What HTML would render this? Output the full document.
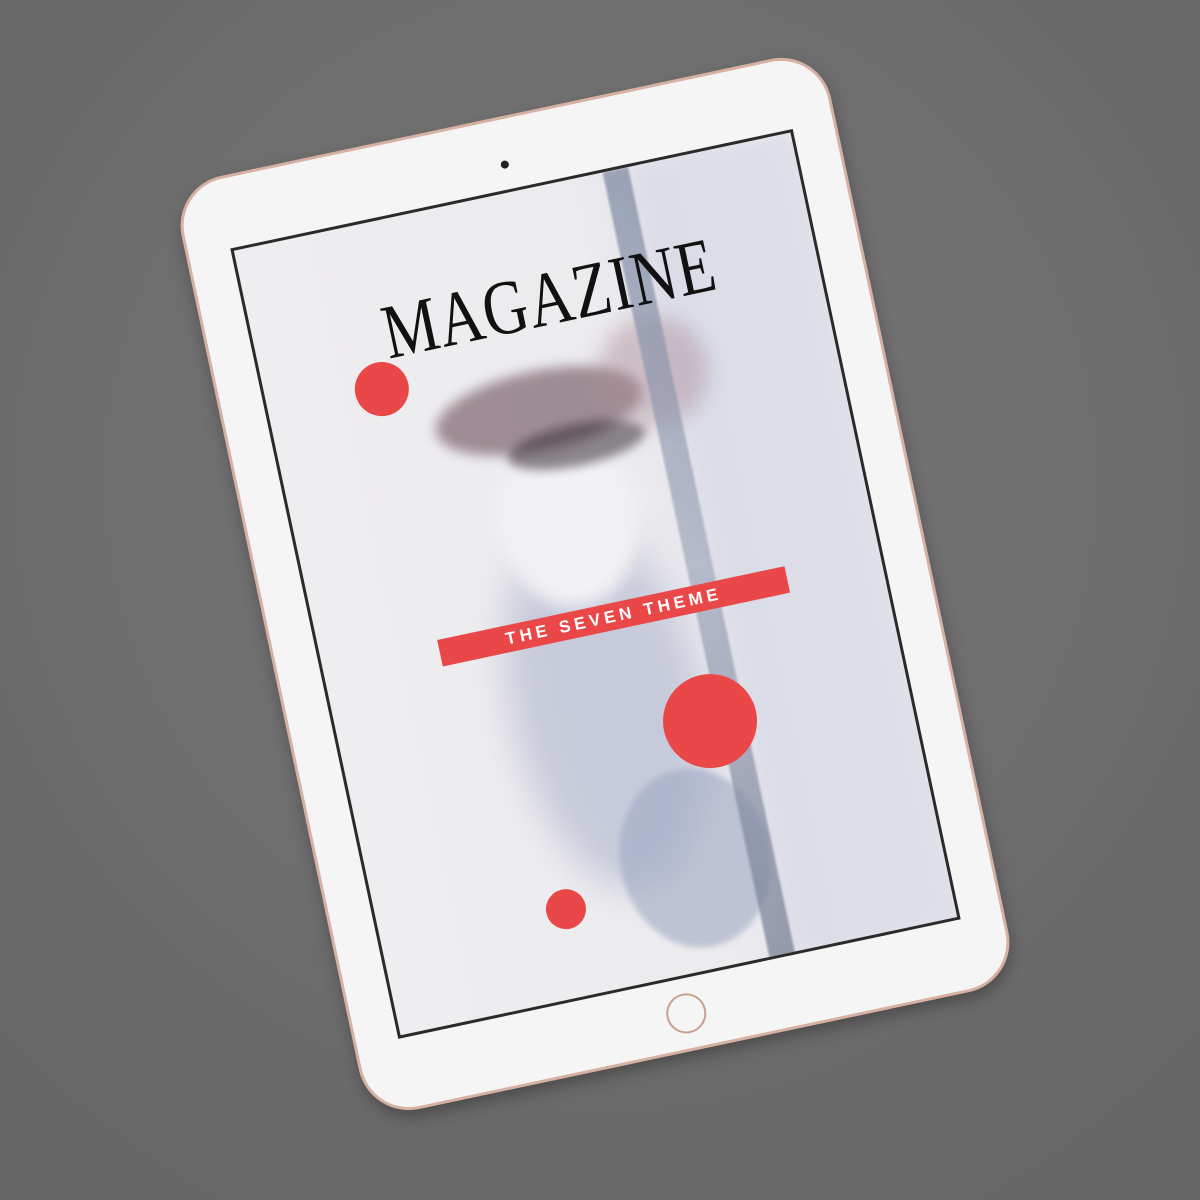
<!DOCTYPE html>
<html><head><style>
html,body{margin:0;padding:0;width:1200px;height:1200px;overflow:hidden;background:radial-gradient(circle at 50% 40%,#787878,#666 90%);}
.ipad{position:absolute;left:266px;top:110px;width:658px;height:948px;border-radius:48px;background:#f6f5f5;transform:rotate(-12deg);box-shadow:0 0 0 3px #d6b0a1,0 8px 18px rgba(0,0,0,.35);}
.cam{position:absolute;left:324px;top:41px;width:8px;height:8px;border-radius:50%;background:#222;}
.home{position:absolute;left:309px;top:893px;width:40px;height:40px;border-radius:50%;border:2px solid #c9a090;box-sizing:border-box;}
.screen{position:absolute;left:42px;top:70px;width:575px;height:808px;border:3px solid #2a2a2a;box-sizing:border-box;overflow:hidden;background:linear-gradient(90deg,#eeedef 0%,#ecebee 60%,#e4e5ec 75%,#e8e9ef 100%);}
.b{position:absolute;border-radius:50%;}
.red{position:absolute;border-radius:50%;background:#ea4749;}
.mag{position:absolute;left:0;width:575px;top:78px;text-align:center;font-family:"Liberation Serif",serif;font-size:62px;letter-spacing:1px;color:#111;transform:scaleY(1.25);padding-left:22px;box-sizing:border-box}
.bar{position:absolute;left:118px;top:423px;width:355px;height:27px;background:#ea4749;color:#fff;font-family:"Liberation Sans",sans-serif;font-weight:bold;font-size:17px;letter-spacing:4px;line-height:27px;text-align:center;}
</style></head><body>
<div class="ipad">
 <div class="cam"></div>
 <div class="home"></div>
 <div class="screen">
  <div class="b" style="left:400px;top:0;width:175px;height:808px;border-radius:0;background:rgba(200,203,220,.35);filter:blur(10px)"></div>
  <div class="b" style="left:175px;top:330px;width:190px;height:380px;background:rgba(130,140,180,.35);filter:blur(18px)"></div>
  <div class="b" style="left:250px;top:600px;width:150px;height:180px;background:rgba(160,168,195,.6);filter:blur(3px)"></div>
  <div class="b" style="left:200px;top:250px;width:140px;height:170px;background:#f2f1f3;filter:blur(8px)"></div>
  <div class="b" style="left:160px;top:180px;width:210px;height:80px;background:rgba(125,100,110,.7);filter:blur(6px)"></div>
  <div class="b" style="left:225px;top:240px;width:140px;height:42px;background:rgba(55,45,55,.55);filter:blur(5px)"></div>
  <div class="b" style="left:330px;top:150px;width:110px;height:110px;background:rgba(170,140,150,.45);filter:blur(10px)"></div>
  <div style="position:absolute;left:377px;top:0;width:26px;height:808px;background:linear-gradient(180deg,rgba(130,140,165,.75),rgba(150,158,180,.6) 50%,rgba(120,128,150,.75));filter:blur(1px)"></div>
  <div class="mag">MAGAZINE</div>
  <div class="red" style="left:89px;top:139px;width:54px;height:54px"></div>
  <div class="bar">THE SEVEN THEME</div>
  <div class="red" style="left:321px;top:512px;width:94px;height:94px"></div>
  <div class="red" style="left:168px;top:693px;width:40px;height:40px"></div>
 </div>
</div>
</body></html>
